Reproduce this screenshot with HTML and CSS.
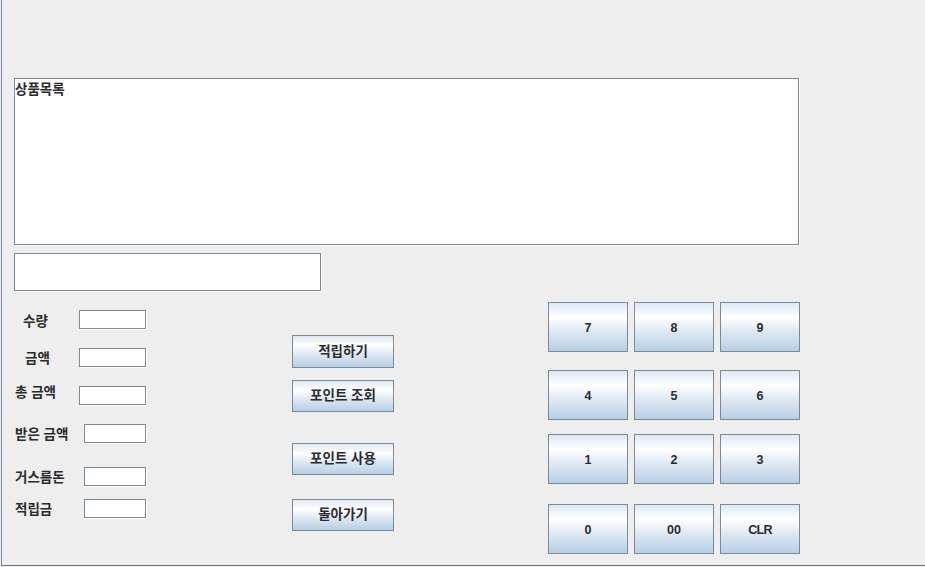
FILE: index.html
```html
<!DOCTYPE html>
<html lang="ko">
<head>
<meta charset="utf-8">
<title>POS</title>
<link rel="stylesheet" href="styles.css">
</head>
<body>
<div class="frame">
  <div class="list">상품목록</div>
  <div class="field-wide"></div>
  <div class="lower">
    <div class="form">
      <div class="row"><span class="label label-a">수량</span><span class="input"></span></div>
      <div class="row gap-19"><span class="label label-b">금액</span><span class="input"></span></div>
      <div class="row gap-19"><span class="label label-c">총 금액</span><span class="input"></span></div>
      <div class="row gap-19"><span class="label wide">받은 금액</span><span class="input short"></span></div>
      <div class="row gap-24"><span class="label wide">거스름돈</span><span class="input short"></span></div>
      <div class="row gap-13"><span class="label wide">적립금</span><span class="input short"></span></div>
    </div>
    <div class="actions">
      <button class="btn action tall">적립하기</button>
      <button class="btn action m12">포인트 조회</button>
      <button class="btn action m31">포인트 사용</button>
      <button class="btn action m24">돌아가기</button>
    </div>
    <div class="keypad">
      <div class="keyrow">
        <button class="btn key">7</button>
        <button class="btn key">8</button>
        <button class="btn key">9</button>
      </div>
      <div class="keyrow m18">
        <button class="btn key">4</button>
        <button class="btn key">5</button>
        <button class="btn key">6</button>
      </div>
      <div class="keyrow m14">
        <button class="btn key">1</button>
        <button class="btn key">2</button>
        <button class="btn key">3</button>
      </div>
      <div class="keyrow m20">
        <button class="btn key">0</button>
        <button class="btn key">00</button>
        <button class="btn key clr">CLR</button>
      </div>
    </div>
  </div>
</div>
</body>
</html>
```

FILE: styles.css
```css
* {
  box-sizing: border-box;
}

html, body {
  margin: 0;
  padding: 0;
  background: #eeeeee;
  overflow: hidden;
}

body {
  width: 925px;
  height: 567px;
  font-family: "Noto Sans CJK KR", "Liberation Sans", sans-serif;
  color: #333333;
}

.frame {
  margin-left: 1px;
  width: 924px;
  height: 566px;
  border-left: 1px solid #7488a0;
  border-bottom: 1px solid #66778a;
  padding-top: 78px;
  display: flex;
  flex-direction: column;
}

.list {
  margin-left: 12px;
  width: 785px;
  height: 167px;
  flex: none;
  background: #ffffff;
  border: 1px solid #7a8a99;
  box-shadow: 1px 1px 0 #ffffff;
  font-size: 13.5px;
  font-weight: bold;
  line-height: 16px;
  padding-top: 1px;
  color: #2b2b2b;
}

.field-wide {
  margin-top: 8px;
  margin-left: 12px;
  width: 307px;
  height: 38px;
  flex: none;
  background: #ffffff;
  border: 1px solid #7a8a99;
  box-shadow: 1px 1px 0 #ffffff;
}

.lower {
  display: flex;
  flex: 1;
}

.form {
  width: 290px;
  padding-top: 19px;
  display: flex;
  flex-direction: column;
}

.row {
  display: flex;
  align-items: flex-start;
  height: 19px;
  padding-left: 13px;
}

.gap-19 { margin-top: 19px; }
.gap-24 { margin-top: 24px; }
.gap-13 { margin-top: 13px; }

.label {
  width: 64px;
  height: 19px;
  line-height: 19px;
  font-size: 13.5px;
  font-weight: bold;
  white-space: nowrap;
  color: #2b2b2b;
}

.label.wide {
  width: 69px;
}

.label-a {
  padding-left: 8px;
  margin-top: 1px;
}

.label-b {
  padding-left: 10px;
}

.label-c {
  margin-top: -4px;
  margin-bottom: 4px;
}

.input {
  display: block;
  width: 67px;
  height: 19px;
  background: #ffffff;
  border: 1px solid #7a8a99;
  box-shadow: 1px 1px 0 #ffffff;
}

.input.short {
  width: 62px;
}

.btn {
  appearance: none;
  margin: 0;
  padding: 0;
  border: 1px solid #7a8a99;
  background: linear-gradient(to bottom, #dde8f3 0%, #ffffff 30%, #dde8f3 60%, #b8cfe5 100%);
  color: #2b2b2b;
  font-weight: bold;
  display: flex;
  align-items: center;
  justify-content: center;
  cursor: default;
}

.actions {
  width: 102px;
  padding-top: 44px;
  display: flex;
  flex-direction: column;
}

.action {
  width: 102px;
  height: 32px;
  font-family: "Noto Sans CJK KR", sans-serif;
  font-size: 13.5px;
  line-height: 1;
  padding-bottom: 2px;
}

.action.tall { height: 33px; }
.m12 { margin-top: 12px; }
.m31 { margin-top: 31px; }
.m24 { margin-top: 24px; }

.keypad {
  margin-left: 154px;
  padding-top: 11px;
  display: flex;
  flex-direction: column;
}

.keyrow {
  display: flex;
  gap: 6px;
}

.m18 { margin-top: 18px; }
.m14 { margin-top: 14px; }
.m20 { margin-top: 20px; }

.key {
  width: 80px;
  height: 50px;
  font-family: "Liberation Sans", Arial, sans-serif;
  font-size: 12.5px;
  padding-top: 1px;
}

.key.clr {
  letter-spacing: -0.8px;
}
```
